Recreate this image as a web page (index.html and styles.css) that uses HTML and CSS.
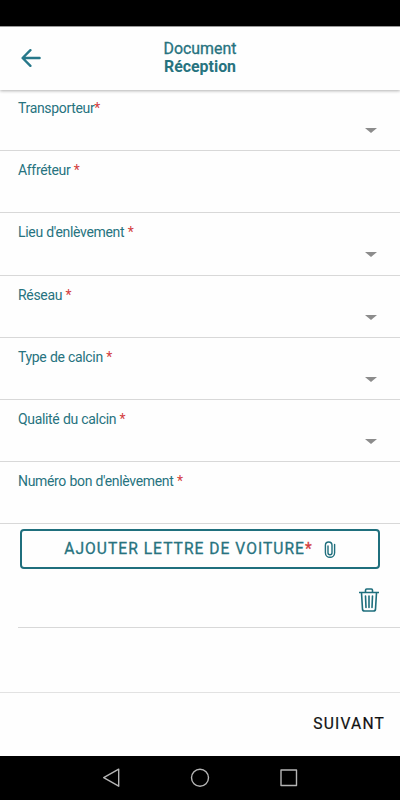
FILE: index.html
```
<!DOCTYPE html>
<html lang="fr">
<head>
    <meta charset="UTF-8">
    <meta name="viewport" content="width=device-width, initial-scale=1.0">
    <title>Document Réception</title>
    <link rel="stylesheet" href="styles.css">
</head>
<body>
    <div class="status-bar"></div>

    <header class="header">
        <svg class="back-icon" viewBox="0 0 20 18" width="20" height="18">
            <path d="M18.6 9H2M9.4 1.2L1.6 9l7.8 7.8"/>
        </svg>
        <h1><span>Document</span><strong>Réception</strong></h1>
    </header>

    <main>
        <form id="receptionForm">
            <div class="field"><label>Transporteur<span class="required">*</span></label><span class="arrow"></span></div>
            <div class="field"><label>Affréteur <span class="required">*</span></label></div>
            <div class="field"><label>Lieu d'enlèvement <span class="required">*</span></label><span class="arrow"></span></div>
            <div class="field"><label>Réseau <span class="required">*</span></label><span class="arrow"></span></div>
            <div class="field"><label>Type de calcin <span class="required">*</span></label><span class="arrow"></span></div>
            <div class="field"><label>Qualité du calcin <span class="required">*</span></label><span class="arrow"></span></div>
            <div class="field"><label>Numéro bon d'enlèvement <span class="required">*</span></label></div>

            <button type="button" class="add-button">
                <span>AJOUTER LETTRE DE VOITURE<span class="required">*</span></span>
                <svg class="clip-icon" viewBox="0 0 12 17" width="12" height="17">
                    <path d="M10.6 3.5v8.2a4.6 4.6 0 0 1-9.2 0V4.3a3.3 3.3 0 0 1 6.6 0v7.4a2 2 0 0 1-4 0V5"/>
                </svg>
            </button>

            <div class="file-row">
                <svg class="trash-icon" viewBox="0 0 20 24" width="20" height="24">
                    <path d="M.5 4.5h19M6.5 4.3V2.2Q6.5 1 7.7 1h4.6q1.2 0 1.2 1.2v2.1M2.5 4.7l1 16.4q.1 1.9 2 1.9h9q1.9 0 2-1.9l1-16.4M6.5 8l.5 11.5M10 8v11.5M13.5 8L13 19.5"/>
                </svg>
            </div>
        </form>
    </main>

    <footer class="footer">
        <button type="submit" form="receptionForm" class="next-button">SUIVANT</button>
    </footer>

    <nav class="nav-bar">
        <svg viewBox="0 0 20 20" width="20" height="20"><path d="M17.7 1.2v17L2.7 9.7z"/></svg>
        <svg viewBox="0 0 20 20" width="20" height="20"><circle cx="10" cy="9.8" r="8.5"/></svg>
        <svg viewBox="0 0 20 20" width="20" height="20"><path d="M2 2h15.5v15.5H2z"/></svg>
    </nav>
</body>
</html>
```

FILE: styles.css
```
* {
    box-sizing: border-box;
}

body {
    margin: 0;
    height: 800px;
    display: flex;
    flex-direction: column;
    font-family: Roboto, Arial, sans-serif;
    background-color: #fefefe;
    color: #27737f;
    overflow: hidden;
}

svg {
    display: block;
    fill: none;
    stroke: #1f6f7d;
    stroke-linecap: round;
    stroke-linejoin: round;
}

.status-bar {
    height: 26px;
    background-color: #000;
}

.header {
    display: grid;
    grid-template-columns: 40px 1fr 40px;
    align-items: center;
    height: 64px;
    padding: 0 1px;
    border-top: 1px solid #999;
    box-shadow: 0 1px 3px rgba(0, 0, 0, 0.3);
}

.back-icon {
    margin: 0 0 1px 20px;
    stroke: #27788a;
    stroke-width: 2.4;
}

.header h1 {
    display: flex;
    flex-direction: column;
    margin: 0 0 1px;
    font-size: 15.9px;
    font-weight: 500;
    line-height: 18px;
    text-align: center;
}

.header h1 span {
    font-weight: 400;
    -webkit-text-stroke: 0.3px;
}

.header strong {
    font-weight: 700;
}

main {
    height: 602px;
}

.field {
    display: flex;
    flex-direction: column;
    height: 62.2px;
    padding: 10px 23px 0 18px;
    border-bottom: 1px solid #d8d8d8;
}

.field:first-child {
    height: 61.2px;
}

.field label {
    font-size: 14px;
    line-height: 16px;
    letter-spacing: -0.33px;
    word-spacing: 0.3px;
}

.field:not(:first-child) {
    padding-top: 11px;
}

.required {
    color: #d3403f;
}

.arrow {
    align-self: flex-end;
    margin-top: 12px;
    border: 6px solid transparent;
    border-top: 5px solid #8c8c8c;
    border-bottom: 0;
}

button {
    font-family: inherit;
    background: none;
    cursor: pointer;
}

.add-button {
    display: flex;
    justify-content: center;
    align-items: center;
    gap: 11px;
    width: 360px;
    height: 40px;
    margin: 5px 20px 0;
    padding: 0;
    border: 2px solid #1f6f7d;
    border-radius: 4px;
    color: #27737f;
    font-size: 15.6px;
    font-weight: 400;
    letter-spacing: 1.02px;
    -webkit-text-stroke: 0.3px;
}

.clip-icon {
    stroke-width: 1.4;
}

.file-row {
    display: flex;
    justify-content: flex-end;
    height: 59px;
    margin-left: 18px;
    padding: 19px 21px 0 0;
    border-bottom: 1px solid #d8d8d8;
}

.trash-icon {
    stroke-width: 1.6;
}

.footer {
    display: flex;
    justify-content: flex-end;
    align-items: center;
    height: 64px;
    padding: 0 15px 1px 0;
    border-top: 1px solid #e2e2e2;
}

.next-button {
    padding: 0;
    border: none;
    color: #111;
    font-size: 15.6px;
    font-weight: 400;
    letter-spacing: 1.2px;
    -webkit-text-stroke: 0.2px;
}

.nav-bar {
    display: flex;
    justify-content: center;
    align-items: center;
    gap: 69px;
    height: 44px;
    background-color: #000;
}

.nav-bar svg {
    stroke: #b5b5b5;
    stroke-width: 1.4;
}
```
